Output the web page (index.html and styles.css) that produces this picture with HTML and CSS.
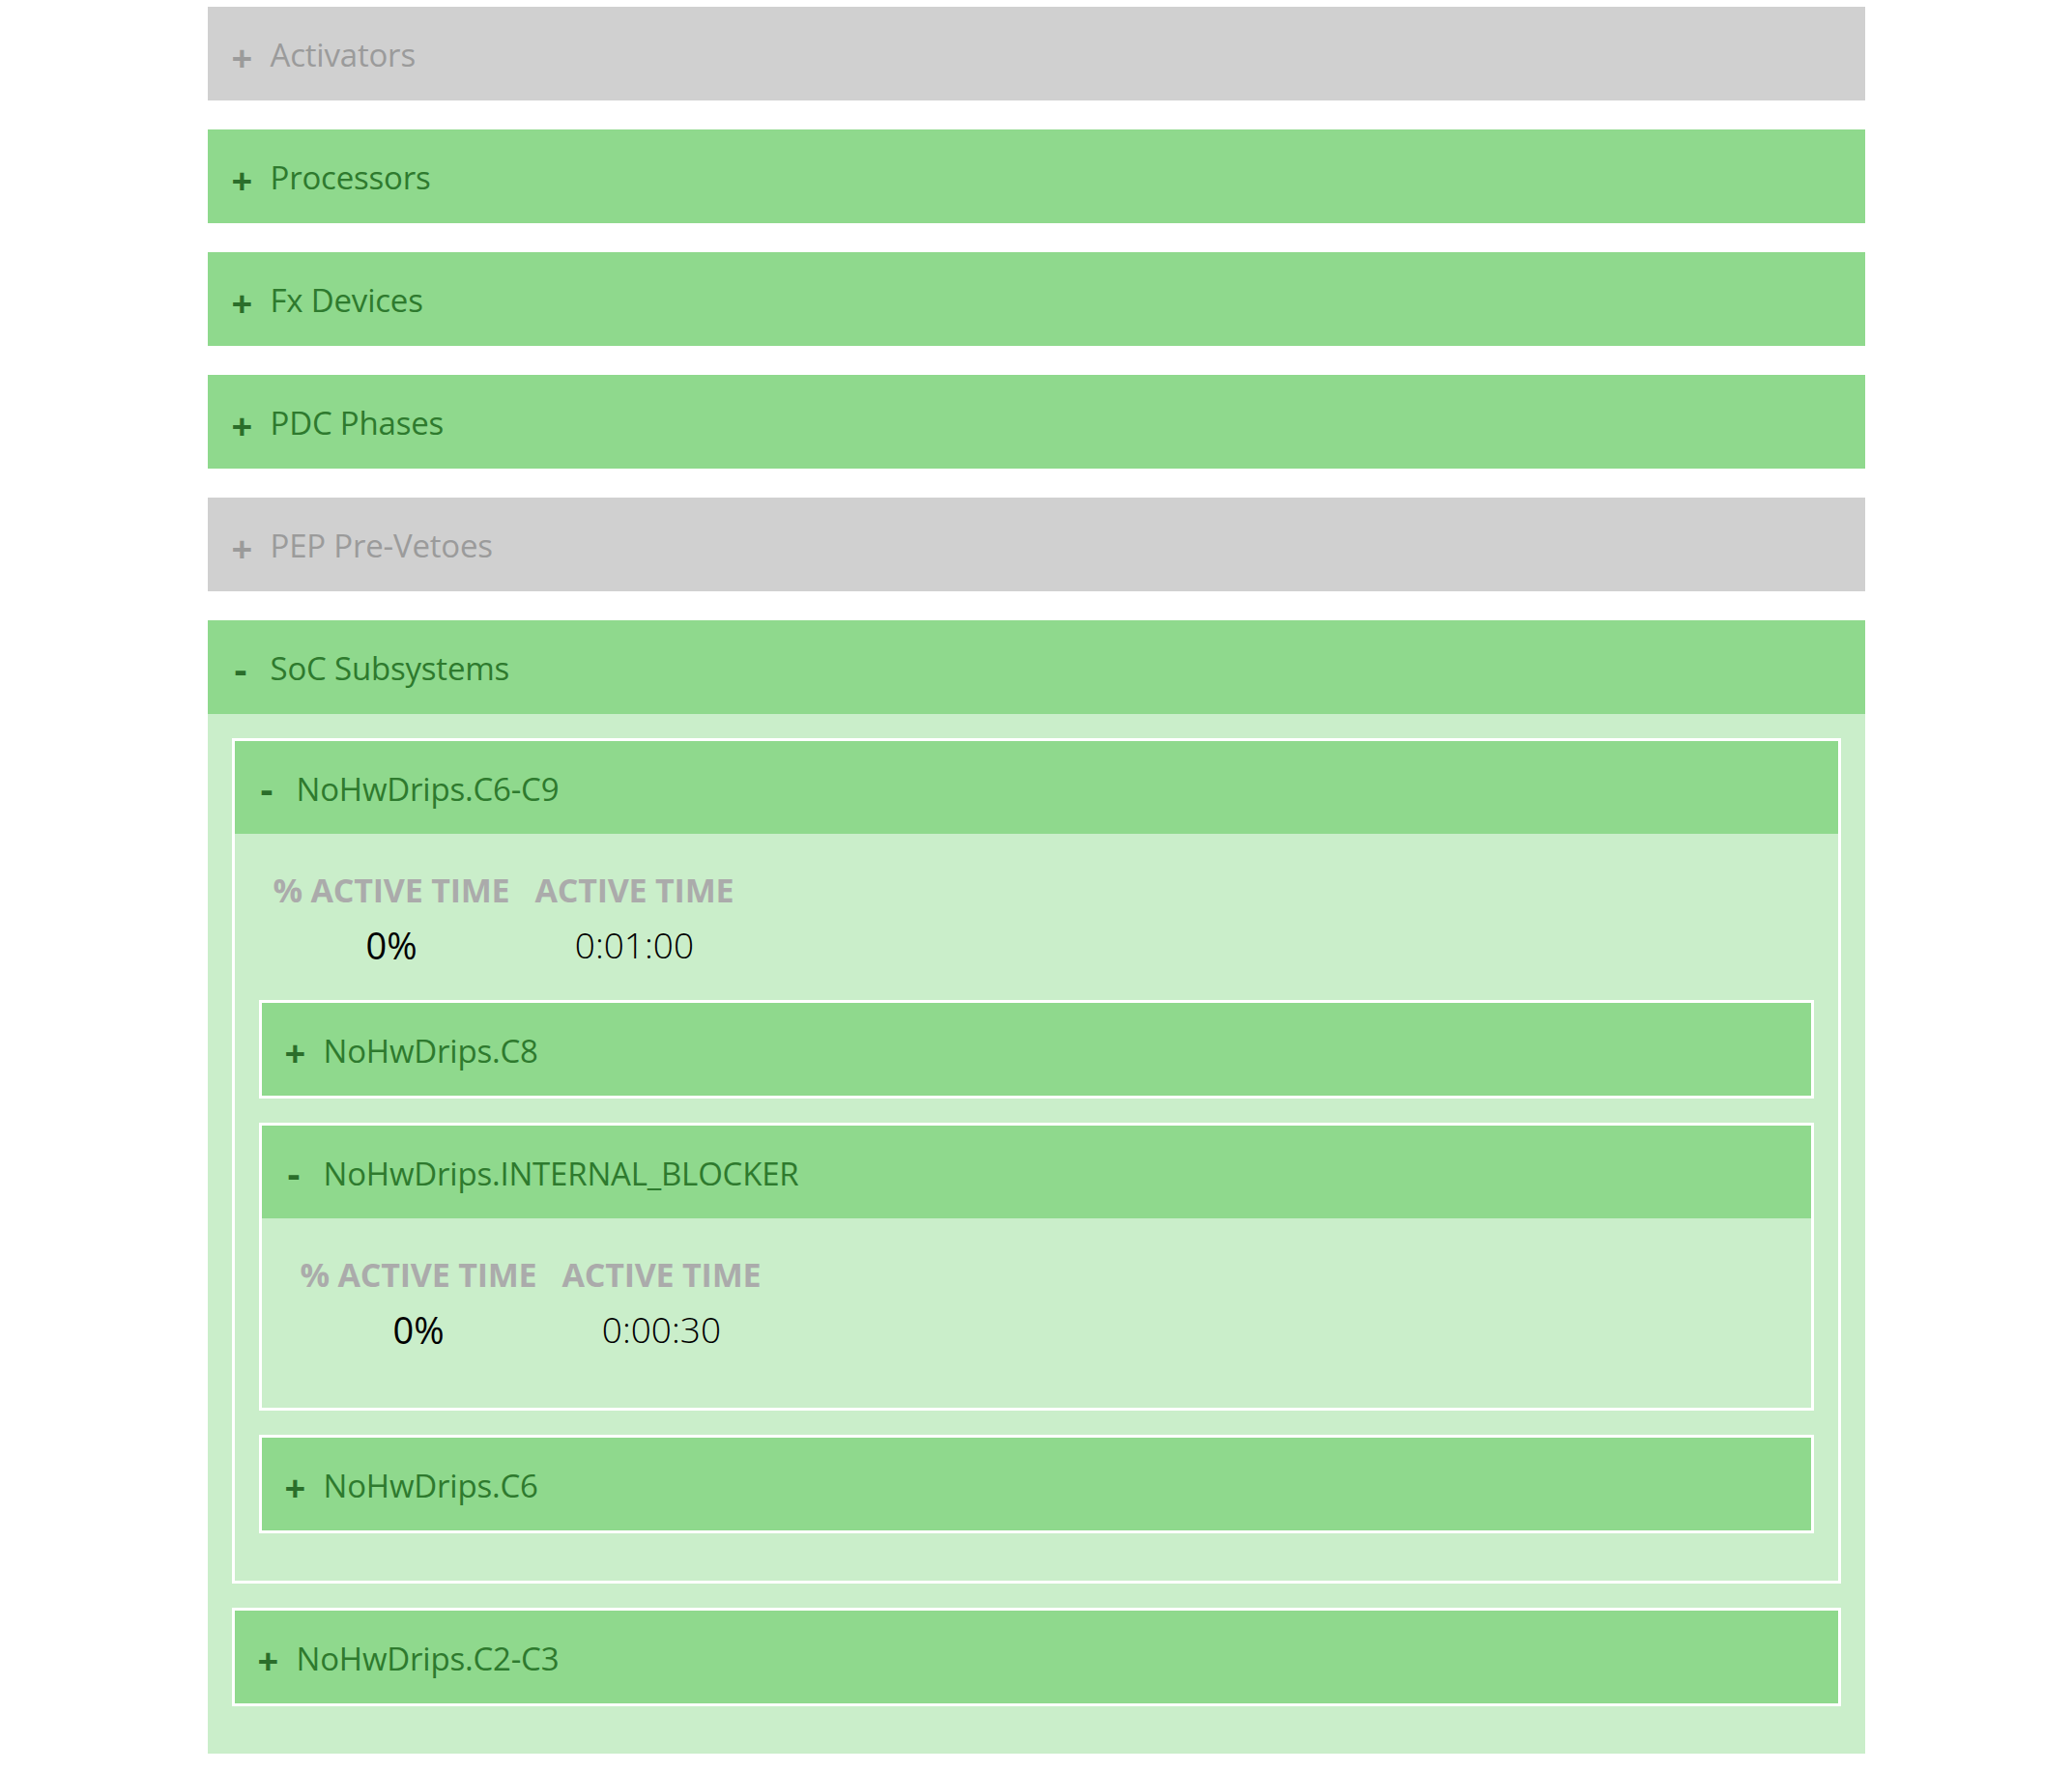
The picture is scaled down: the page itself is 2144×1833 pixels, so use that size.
FILE: index.html
```html
<!DOCTYPE html>
<html lang="en">
<head>
<meta charset="utf-8">
<title>SoC Subsystems</title>
<link rel="stylesheet" href="styles.css">
</head>
<body>
<div class="tree">
  <div class="node off">
    <div class="head"><span class="tog">+</span><span class="name">Activators</span></div>
  </div>
  <div class="node on">
    <div class="head"><span class="tog">+</span><span class="name">Processors</span></div>
  </div>
  <div class="node on">
    <div class="head"><span class="tog">+</span><span class="name">Fx Devices</span></div>
  </div>
  <div class="node on">
    <div class="head"><span class="tog">+</span><span class="name">PDC Phases</span></div>
  </div>
  <div class="node off">
    <div class="head"><span class="tog">+</span><span class="name">PEP Pre-Vetoes</span></div>
  </div>
  <div class="node on">
    <div class="head"><span class="tog minus">-</span><span class="name">SoC Subsystems</span></div>
    <div class="body">
      <div class="node sub on">
        <div class="head"><span class="tog minus">-</span><span class="name">NoHwDrips.C6-C9</span></div>
        <div class="body">
          <table class="stats">
            <tr><th>% ACTIVE TIME</th><th>ACTIVE TIME</th></tr>
            <tr><td class="pct">0%</td><td>0:01:00</td></tr>
          </table>
          <div class="node sub on">
            <div class="head"><span class="tog">+</span><span class="name">NoHwDrips.C8</span></div>
          </div>
          <div class="node sub on">
            <div class="head"><span class="tog minus">-</span><span class="name">NoHwDrips.INTERNAL_BLOCKER</span></div>
            <div class="body">
              <table class="stats">
                <tr><th>% ACTIVE TIME</th><th>ACTIVE TIME</th></tr>
                <tr><td class="pct">0%</td><td>0:00:30</td></tr>
              </table>
            </div>
          </div>
          <div class="node sub on">
            <div class="head"><span class="tog">+</span><span class="name">NoHwDrips.C6</span></div>
          </div>
        </div>
      </div>
      <div class="node sub on">
        <div class="head"><span class="tog">+</span><span class="name">NoHwDrips.C2-C3</span></div>
      </div>
    </div>
  </div>
</div>
</body>
</html>
```
FILE: styles.css
```css
html, body {
  margin: 0;
  padding: 0;
  background: #ffffff;
}

body {
  font-family: "Open Sans", "Noto Sans", "Liberation Sans", sans-serif;
}

.tree {
  width: 1715px;
  margin: 0 auto;
  padding-top: 7px;
}

.tree > .node {
  margin-bottom: 30px;
}

.tree > .node:last-child {
  margin-bottom: 0;
}

.head {
  box-sizing: border-box;
  height: 97px;
  display: flex;
  align-items: center;
  padding-left: 25px;
  font-size: 33px;
  letter-spacing: -0.2px;
  white-space: nowrap;
}

.tog {
  width: 40px;
  flex: none;
  font-weight: 700;
  font-size: 38px;
  line-height: 1;
  letter-spacing: 0;
  position: relative;
  top: 3px;
}

.tog.minus {
  font-size: 40px;
  top: 1px;
  padding-left: 3px;
  width: 37px;
}

.name {
  line-height: 1;
  position: relative;
  top: 1px;
}

.node.on > .head {
  background: #8fd98d;
  color: #2e7a2e;
}

.node.on > .head .tog {
  color: #2b6e2b;
}

.node.off > .head {
  background: #d0d0d0;
  color: #9b9b9b;
}

.body {
  display: flow-root;
  background: #caeeca;
  padding: 0 25px 24px;
}

.node.sub {
  border: 3px solid #ffffff;
  margin: 25px 0;
}

.node.sub > .head {
  height: 96px;
  padding-left: 24px;
}

.stats {
  border-collapse: collapse;
  margin: 38px 0 35px 2px;
}

.stats th {
  padding: 0 13px;
  font-size: 34px;
  line-height: 40px;
  font-weight: 700;
  letter-spacing: -0.2px;
  color: #ababab;
  text-align: center;
  white-space: nowrap;
}

.stats td {
  padding: 15px 13px 0;
  font-size: 37px;
  line-height: 44px;
  font-weight: 300;
  color: #000000;
  text-align: center;
  white-space: nowrap;
}

.stats td.pct {
  font-weight: 400;
  font-size: 38px;
}
```
